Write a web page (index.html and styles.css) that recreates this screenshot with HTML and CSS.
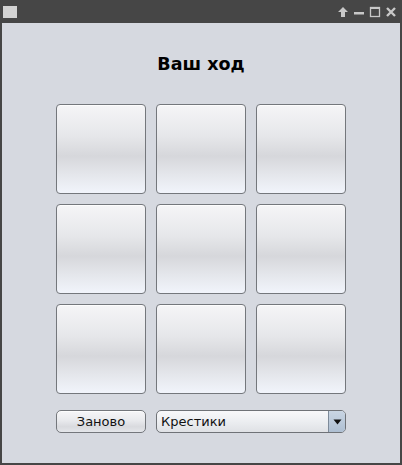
FILE: index.html
```html
<!DOCTYPE html>
<html>
<head>
<meta charset="utf-8">
<link rel="stylesheet" href="styles.css">
</head>
<body>
<div class="window">
  <div class="titlebar">
    <div class="app-icon"></div>
    <div class="controls">
      <svg class="ctl" width="12" height="12" viewBox="0 0 12 12"><path d="M6 1 L11 6 L8 6 L8 11 L4 11 L4 6 L1 6 Z" fill="#c8c8c8"/></svg>
      <svg class="ctl" width="12" height="12" viewBox="0 0 12 12"><rect x="1" y="6" width="10" height="2.5" fill="#c8c8c8"/></svg>
      <svg class="ctl" width="12" height="12" viewBox="0 0 12 12"><rect x="1.5" y="1.5" width="9" height="9" fill="none" stroke="#c8c8c8" stroke-width="1.3"/><rect x="1" y="1" width="10" height="2" fill="#c8c8c8"/></svg>
      <svg class="ctl" width="12" height="12" viewBox="0 0 12 12"><path d="M2 2 L10 10 M10 2 L2 10" stroke="#c8c8c8" stroke-width="2.4"/></svg>
    </div>
  </div>
  <div class="content">
    <div class="status">Ваш ход</div>
    <div class="board">
      <button class="cell"></button><button class="cell"></button><button class="cell"></button>
      <button class="cell"></button><button class="cell"></button><button class="cell"></button>
      <button class="cell"></button><button class="cell"></button><button class="cell"></button>
    </div>
    <div class="bottom">
      <button class="btn">Заново</button>
      <div class="combo">
        <span class="combo-text">Крестики</span>
        <span class="combo-arrow"><svg width="9" height="6" viewBox="0 0 9 6"><path d="M0.5 0.5 L8.5 0.5 L4.5 5.5 Z" fill="#111"/></svg></span>
      </div>
    </div>
  </div>
</div>
</body>
</html>
```

FILE: styles.css
```css
html, body {
  margin: 0;
  padding: 0;
  width: 402px;
  height: 465px;
  overflow: hidden;
  background: #464646;
}
.window {
  width: 402px;
  height: 465px;
  background: #464646;
  display: flex;
  flex-direction: column;
  box-sizing: border-box;
  padding: 0 2px 2px 2px;
}
.titlebar {
  height: 23px;
  flex: 0 0 23px;
  display: flex;
  align-items: flex-start;
  justify-content: space-between;
}
.app-icon {
  width: 14px;
  height: 12px;
  margin-top: 6px;
  margin-left: 1px;
  background: #d3d3d3;
}
.controls {
  display: flex;
  gap: 4px;
  margin-top: 6px;
  margin-right: 3px;
}
.ctl { display: block; }
.content {
  flex: 1;
  background: #d6d9e0;
  display: flex;
  flex-direction: column;
  align-items: center;
  font-family: "DejaVu Sans", sans-serif;
}
.status {
  margin-top: 29px;
  height: 25px;
  font-size: 17.5px;
  font-weight: bold;
  color: #000;
  line-height: 25px;
  text-align: center;
}
.board {
  margin-top: 27px;
  display: grid;
  grid-template-columns: repeat(3, 90px);
  grid-template-rows: repeat(3, 90px);
  gap: 10px;
}
.cell, .btn {
  box-sizing: border-box;
  border: 1px solid #74777c;
  border-radius: 4px;
  background: linear-gradient(to bottom, #f5f5f7 0%, #e6e7ea 35%, #d6d7db 58%, #e5e7ec 80%, #f1f4fb 100%);
  box-shadow: inset 0 1px 0 #fdfdfd;
  padding: 0;
  margin: 0;
}
.bottom {
  margin-top: 16px;
  display: flex;
  gap: 10px;
}
.btn {
  width: 90px;
  height: 23px;
  font-family: "DejaVu Sans", sans-serif;
  font-size: 13px;
  color: #111;
  border-radius: 5px;
  background: linear-gradient(to bottom, #f6f6f8 0%, #e9eaed 45%, #d9dade 75%, #e4e6ea 100%);
}
.combo {
  box-sizing: border-box;
  width: 190px;
  height: 23px;
  border: 1px solid #6f7277;
  border-radius: 5px;
  background: linear-gradient(to bottom, #f8f8fa 0%, #eceef1 50%, #dfe1e5 100%);
  display: flex;
  align-items: center;
  overflow: hidden;
}
.combo-text {
  flex: 1;
  padding-left: 4px;
  font-size: 13px;
  color: #111;
}
.combo-arrow {
  width: 16px;
  height: 100%;
  border-left: 1px solid #7d8a99;
  background: linear-gradient(to bottom, #c9d5e3 0%, #aebfd2 100%);
  display: flex;
  align-items: center;
  justify-content: center;
}
.combo-arrow svg { display: block; }
```
